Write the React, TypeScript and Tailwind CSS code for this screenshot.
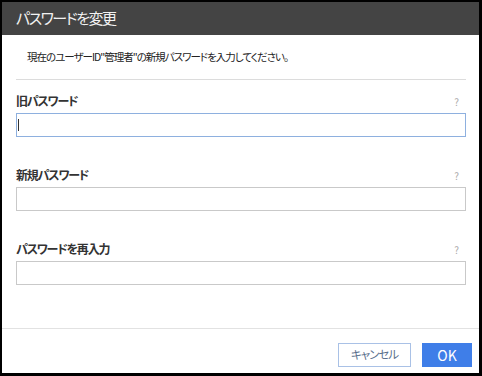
const FONT = "font-['Noto_Sans_CJK_JP','Noto_Sans',sans-serif] [font-feature-settings:'palt']";

type FieldProps = {
  label: string;
  focused?: boolean;
};

function Field({ label, focused }: FieldProps) {
  return (
    <div className="flex flex-col gap-[4px]">
      <div className="flex h-[16px] items-center justify-between pr-[7px]">
        <span className="text-[12px] font-bold tracking-[-1.2px] text-[#333]">{label}</span>
        <span className="text-[10px] text-[#aaa]">?</span>
      </div>
      <div className="relative">
        <input
          type="password"
          className={`block h-[24px] w-full bg-white px-[4px] text-[12px] outline-none ${
            focused ? "border border-[#8eb0df]" : "border border-[#c9c9c9]"
          }`}
        />
        {focused && (
          <span className="absolute left-[2px] top-[6px] h-[12px] w-[1px] bg-[#333]" />
        )}
      </div>
    </div>
  );
}

export default function App() {
  return (
    <div className={`flex h-[376px] w-[482px] bg-black pb-[3px] pl-[2px] pr-[3px] pt-[2px] ${FONT}`}>
      <div className="flex flex-1 flex-col bg-white">
        {/* Header */}
        <div className="flex h-[33px] items-center bg-[#444] px-[14px]">
          <h1 className="text-[15px] font-normal tracking-[-1.5px] text-[#f2f2f2]">パスワードを変更</h1>
        </div>

        {/* Body */}
        <div className="flex flex-1 flex-col pl-[14px] pr-[13px]">
          <div className="flex h-[45px] items-center border-b border-[#dcdcdc] pl-[11px]">
            <p className="text-[10.5px] tracking-[-1px] text-[#222]">
              現在のユーザーID"管理者"の新規パスワードを入力してください。
            </p>
          </div>
          <div className="mt-[13px] flex flex-col gap-[30px]">
            <Field label="旧パスワード" focused />
            <Field label="新規パスワード" />
            <Field label="パスワードを再入力" />
          </div>
        </div>

        {/* Footer */}
        <div className="flex h-[45px] items-start justify-end gap-[11px] border-t border-[#e2e2e2] pr-[7px] pt-[14px]">
          <button
            type="button"
            className="h-[24px] w-[73px] border border-[#a9c1e6] bg-white text-[11.5px] tracking-[-1px] text-[#5a6f8c]"
          >
            キャンセル
          </button>
          <button
            type="button"
            className="h-[24px] w-[50px] bg-[#3f7ee8] text-[14px] text-white"
          >
            OK
          </button>
        </div>
      </div>
    </div>
  );
}
